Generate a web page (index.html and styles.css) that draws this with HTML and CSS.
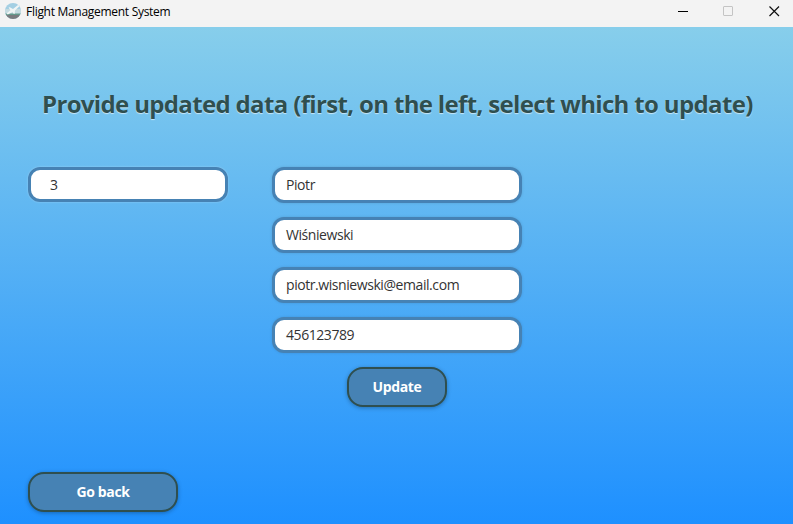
FILE: index.html
```html
<!DOCTYPE html>
<html lang="en">
<head>
<meta charset="utf-8">
<title>Flight Management System</title>
<link rel="stylesheet" href="styles.css">
</head>
<body>
<div class="window">
  <header class="titlebar">
    <svg class="app-icon" viewBox="0 0 16 16" aria-hidden="true">
      <defs>
        <clipPath id="disc"><circle cx="8" cy="8" r="8"/></clipPath>
      </defs>
      <g clip-path="url(#disc)">
        <rect width="16" height="16" fill="#a4cfe3"/>
        <rect y="6" width="16" height="5" fill="#c5dbe0"/>
        <rect y="10.5" width="16" height="2" fill="#64998b"/>
        <rect y="12" width="16" height="4" fill="#797b7e"/>
        <path d="M1.5 10.5 5.5 7.2 3.6 4.6l1.2-.4L8 6 13 2l1.8-.2-.6 1.6L10 7.5 9.6 11l-1.2-.4L7.6 9 2.8 11.5z" fill="#f1f5f5"/>
      </g>
    </svg>
    <span class="caption">Flight Management System</span>
    <div class="controls">
      <svg viewBox="0 0 11 11"><path d="M0 5.5h10" stroke="#000"/></svg>
      <svg viewBox="0 0 11 11"><rect x=".5" y=".5" width="9" height="9" rx=".5" fill="none" stroke="#c4c4c4"/></svg>
      <svg viewBox="0 0 11 11"><path d="M.5.5l9.5 9.5M10 .5.5 10" stroke="#111" stroke-width="1.2"/></svg>
    </div>
  </header>
  <main class="scene">
    <h1 class="heading">Provide updated data (first, on the left, select which to update)</h1>
    <form class="form">
      <div class="field combo">3</div>
      <div class="fields">
        <div class="field">Piotr</div>
        <div class="field">Wiśniewski</div>
        <div class="field">piotr.wisniewski@email.com</div>
        <div class="field">456123789</div>
        <button class="button update" type="button">Update</button>
      </div>
    </form>
    <button class="button back" type="button">Go back</button>
  </main>
</div>
</body>
</html>
```
FILE: styles.css
```css
* { box-sizing: border-box; }
body { margin: 0; font-family: "Open Sans", "Noto Sans", sans-serif; }
.window { width: 793px; height: 524px; display: flex; flex-direction: column; overflow: hidden; }
.titlebar { height: 27px; flex: none; display: flex; align-items: flex-start; background: #f3f3f3; padding: 3px 13px 0 5px; }
.app-icon { width: 16px; height: 16px; }
.caption { margin-left: 5px; font-size: 12px; line-height: 18px; letter-spacing: -0.29px; color: #000; white-space: nowrap; }
.controls { margin: 3px 0 0 auto; display: flex; gap: 34px; }
.controls svg { width: 11px; height: 11px; }
.controls svg:last-child { margin-left: 1px; }
.scene { flex: 1; display: flex; flex-direction: column; align-items: flex-start; padding: 59px 28px 12px; background: linear-gradient(#87ceeb, #1e90ff); }
.heading { margin: 0 0 0 14px; height: 36px; font-size: 24px; line-height: 36px; font-weight: 700; letter-spacing: -0.655px; white-space: nowrap; color: #2f4f4f; text-shadow: 0 1px 1px rgba(255,255,255,.6); }
.form { margin: 45px 0 0; display: flex; align-items: flex-start; gap: 44px; }
.fields { width: 250px; display: flex; flex-direction: column; gap: 14px; }
.field { height: 36px; padding: 0 11px; border: 3px solid #4682b4; border-radius: 12px; background: #fff; font-size: 14px; line-height: 30px; letter-spacing: -0.43px; color: #333; white-space: nowrap; box-shadow: 0 0 3px rgba(0,0,0,.12); }
.combo { width: 200px; height: 35px; padding-left: 19px; box-shadow: 0 0 2px rgba(255,255,255,.35); }
.button { height: 40px; padding: 0; border: 2px solid #2f4f4f; border-radius: 16px; background: #4682b4; color: #fff; font: 700 14px/36px "Open Sans", "Noto Sans", sans-serif; letter-spacing: -0.35px; box-shadow: 0 1px 4px rgba(0,0,0,.3); }
.update { width: 100px; align-self: center; }
.back { width: 150px; margin-top: auto; }
```
